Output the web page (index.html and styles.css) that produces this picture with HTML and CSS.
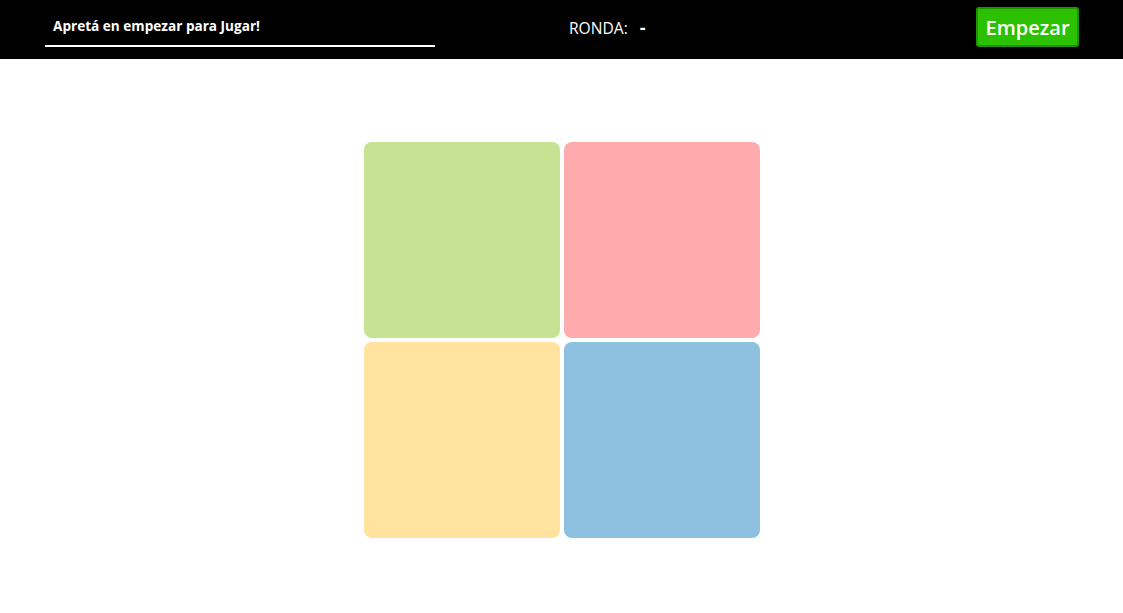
FILE: index.html
```html
<!DOCTYPE html>
<html lang="es">
<head>
<meta charset="utf-8">
<title>Simon</title>
<link rel="stylesheet" href="styles.css">
</head>
<body>
<header class="topbar">
  <div class="status">Apretá en empezar para Jugar!</div>
  <div class="round"><span class="round-label">RONDA:</span><span class="round-value">-</span></div>
  <button class="start">Empezar</button>
</header>
<main class="board">
  <div class="grid">
    <div class="pad pad-green"></div>
    <div class="pad pad-red"></div>
    <div class="pad pad-yellow"></div>
    <div class="pad pad-blue"></div>
  </div>
</main>
</body>
</html>
```

FILE: styles.css
```css
* { box-sizing: border-box; }
body {
  margin: 0;
  background: #fff;
  font-family: "Open Sans", "DejaVu Sans", sans-serif;
}
.topbar {
  height: 59px;
  background: #000;
  display: grid;
  grid-template-columns: 390px 1fr auto;
  align-items: start;
  padding: 0 44px 0 45px;
}
.status {
  margin-top: 16px;
  height: 31px;
  padding: 0 8px;
  color: #fff;
  font-weight: 700;
  font-size: 13.6px;
  line-height: 20px;
  border-bottom: 2px solid #fff;
}
.round {
  margin-top: 17px;
  padding-left: 134px;
  color: #fff;
  font-size: 15.6px;
  line-height: 20px;
  display: flex;
  align-items: baseline;
  gap: 12px;
}
.round-value { font-weight: 700; font-size: 18px; }
.start {
  margin-top: 7px;
  width: 103px;
  height: 40px;
  background: #2cc100;
  border: 2px solid #1f9400;
  border-radius: 3px;
  color: #fff;
  font-family: inherit;
  font-size: 20px;
  font-weight: 600;
  padding: 0;
}
.board {
  display: flex;
  justify-content: center;
  padding-top: 83px;
}
.grid {
  display: grid;
  grid-template-columns: 196px 196px;
  grid-auto-rows: 196px;
  gap: 4px;
  margin-left: 1px;
}
.pad { border-radius: 8px; }
.pad-green { background: #c5e393; }
.pad-red { background: #ffabae; }
.pad-yellow { background: #ffe39e; }
.pad-blue { background: #8ec0e0; }
```
